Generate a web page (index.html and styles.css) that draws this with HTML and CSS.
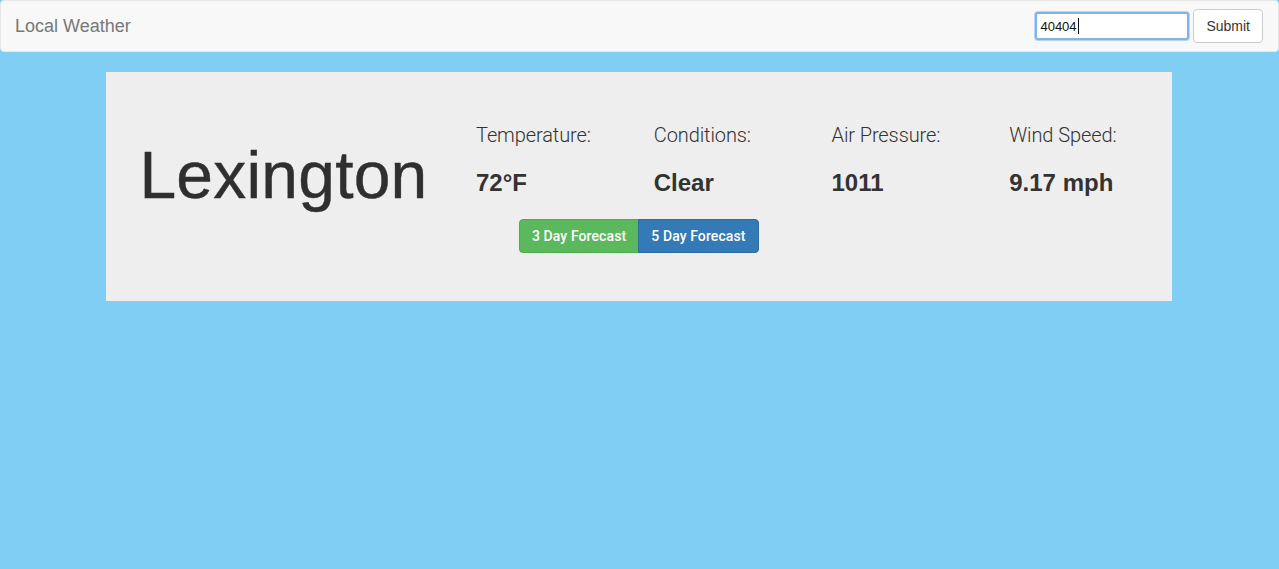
FILE: index.html
```html
<!DOCTYPE html>
<html lang="en">
<head>
<meta charset="utf-8">
<title>Local Weather</title>
<link rel="stylesheet" href="styles.css">
</head>
<body>
<nav class="navbar">
  <a class="brand" href="#">Local Weather</a>
  <form class="navbar-form">
    <span class="zip-wrap"><input class="zip" type="text" value="40404"><span class="caret"></span></span>
    <button class="btn btn-default" type="button">Submit</button>
  </form>
</nav>
<main class="jumbotron">
  <div class="city-col">
    <h1 class="city">Lexington</h1>
  </div>
  <div class="info-col">
    <div class="stats">
      <div class="stat">
        <p class="label">Temperature:</p>
        <h3 class="value">72°F</h3>
      </div>
      <div class="stat">
        <p class="label">Conditions:</p>
        <h3 class="value">Clear</h3>
      </div>
      <div class="stat">
        <p class="label">Air Pressure:</p>
        <h3 class="value">1011</h3>
      </div>
      <div class="stat">
        <p class="label">Wind Speed:</p>
        <h3 class="value">9.17 mph</h3>
      </div>
    </div>
    <div class="forecast-wrap">
      <div class="btn-group">
        <button class="btn btn-success" type="button">3 Day Forecast</button>
        <button class="btn btn-primary" type="button">5 Day Forecast</button>
      </div>
    </div>
  </div>
</main>
</body>
</html>
```
FILE: styles.css
```css
* { box-sizing: border-box; }
html, body { margin: 0; padding: 0; }
body {
  background: #81cef4;
  font-family: "Liberation Sans", Arial, sans-serif;
  font-size: 14px;
  line-height: 1.42857;
  color: #333;
  min-height: 569px;
}
.navbar {
  display: flex;
  align-items: center;
  justify-content: space-between;
  min-height: 52px;
  background: #f8f8f8;
  border: 1px solid #e7e7e7;
  border-radius: 4px;
  margin-bottom: 20px;
}
.brand {
  padding: 15px 15px 15px 14px;
  font-size: 18px;
  line-height: 20px;
  color: #777;
  text-decoration: none;
}
.navbar-form {
  display: flex;
  align-items: center;
  gap: 4px;
  margin: 0 15px 0 0;
  padding: 0;
}
.zip-wrap {
  position: relative;
  display: inline-block;
}
.zip {
  display: block;
  width: 154px;
  height: 28px;
  padding: 1px 3px;
  font-family: "Liberation Sans", Arial, sans-serif;
  font-size: 13px;
  color: #111;
  background: #fff;
  border: 2px solid #7fb4ea;
  border-radius: 3px;
  box-shadow: 0 0 0 1px #b7d6f5;
  outline: none;
}
.caret {
  position: absolute;
  left: 43px;
  top: 6px;
  width: 1px;
  height: 16px;
  background: #111;
}
.btn {
  display: inline-block;
  padding: 6px 12px;
  font-size: 14px;
  line-height: 20px;
  border: 1px solid transparent;
  border-radius: 4px;
  font-family: "Liberation Sans", Arial, sans-serif;
  cursor: pointer;
}
.btn-default {
  background: #fff;
  border-color: #ccc;
  color: #333;
  height: 34px;
}
.jumbotron {
  margin: 0 107px 0 106px;
  background: #eee;
  padding: 48px 0 48px;
  display: grid;
  grid-template-columns: 355px 1fr;
}
.city-col {
  text-align: center;
}
.city {
  margin: 19px 0 0;
  font-size: 66px;
  font-weight: 400;
  line-height: 1.1;
  color: #2f2f2f;
  letter-spacing: 0.2px;
  -webkit-text-stroke: 0.4px #2f2f2f;
}
.stats {
  display: grid;
  grid-template-columns: repeat(4, 1fr);
}
.stat {
  padding: 0 15px;
}
.label {
  margin: 0;
  font-family: Roboto, "Liberation Sans", sans-serif;
  font-weight: 300;
  font-size: 20px;
  line-height: 30px;
  color: #333;
  letter-spacing: -0.1px;
}
.value {
  margin: 20px 0 0;
  font-size: 24px;
  font-weight: 700;
  line-height: 1.1;
  color: #333;
}
.forecast-wrap {
  width: 50%;
  text-align: center;
  margin-top: 23px;
}
.btn-group {
  display: inline-flex;
}
.btn-group .btn {
  color: #fff;
  font-family: Roboto, "Liberation Sans", sans-serif;
  font-weight: 500;
  font-size: 14px;
  height: 34px;
  letter-spacing: 0.1px;
}
.btn-success {
  background: #5cb85c;
  border-color: #4cae4c;
  border-radius: 4px 0 0 4px !important;
}
.btn-primary {
  background: #337ab7;
  border-color: #2e6da4;
  border-radius: 0 4px 4px 0 !important;
  margin-left: -1px;
}
```
